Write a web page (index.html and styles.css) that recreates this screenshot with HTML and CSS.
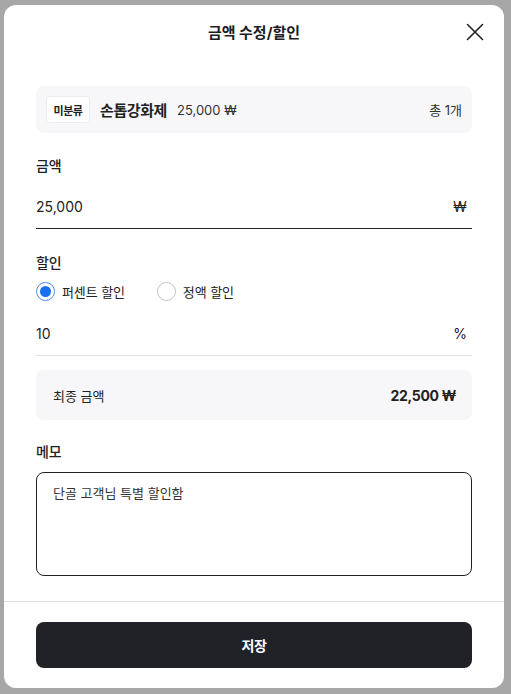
FILE: index.html
```html
<!doctype html>
<html lang="ko">
  <head>
    <meta charset="UTF-8" />
    <title>금액 수정/할인</title>
    <link rel="stylesheet" href="styles.css">
  </head>
  <body>
    <div class="backdrop">
      <section class="modal">
        <header class="modal-header">
          <span></span>
          <h1 class="modal-title">금액 수정/할인</h1>
          <button class="close-button" type="button" aria-label="닫기">
            <svg width="18" height="18" viewBox="0 0 18 18" fill="none" stroke="#222" stroke-width="1.6" stroke-linecap="round">
              <path d="M1.5 1.5L16.5 16.5M16.5 1.5L1.5 16.5" />
            </svg>
          </button>
        </header>

        <div class="modal-body">
          <div class="product">
            <span class="tag">미분류</span>
            <strong class="product-name">손톱강화제</strong>
            <span class="product-price">25,000 ₩</span>
            <span class="product-count">총 1개</span>
          </div>

          <label class="field-label label-amount" for="input-amount">금액</label>
          <div class="input-row input-row--strong">
            <input id="input-amount" class="input" type="text" value="25,000" />
            <span class="unit">₩</span>
          </div>

          <span class="field-label label-discount">할인</span>
          <div class="radio-group">
            <label class="radio-option">
              <span class="radio radio--checked"></span>
              <span>퍼센트 할인</span>
            </label>
            <label class="radio-option">
              <span class="radio"></span>
              <span>정액 할인</span>
            </label>
          </div>
          <div class="input-row input-row--light">
            <input class="input" type="text" value="10" />
            <span class="unit">%</span>
          </div>

          <div class="total">
            <span>최종 금액</span>
            <strong class="total-value">22,500 ₩</strong>
          </div>

          <label class="field-label label-memo" for="memo">메모</label>
          <textarea id="memo" class="memo">단골 고객님 특별 할인함</textarea>
        </div>

        <footer class="modal-footer">
          <button class="save-button" type="button">저장</button>
        </footer>
      </section>
    </div>
  </body>
</html>
```

FILE: styles.css
```css
* {
  margin: 0;
  padding: 0;
  box-sizing: border-box;
}

body {
  font-family: Inter, "Noto Sans CJK KR", sans-serif;
  color: #222;
  background: #a7a7a7;
}

.backdrop {
  width: 511px;
  height: 694px;
  padding: 5px 0 0 4px;
}

.modal {
  width: 500px;
  height: 683px;
  display: flex;
  flex-direction: column;
  background: #fff;
  border-radius: 12px;
  overflow: hidden;
}

.modal-header {
  height: 56px;
  padding: 0 20px 2px;
  display: grid;
  grid-template-columns: 1fr auto 1fr;
  align-items: center;
}

.modal-title {
  font-size: 15px;
  font-weight: 700;
  color: #1d1d1f;
  margin-bottom: 2px;
}

.close-button {
  justify-self: end;
  width: 18px;
  height: 18px;
  border: none;
  background: none;
  cursor: pointer;
  display: flex;
}

.modal-body {
  padding: 25px 32px 0;
  display: flex;
  flex-direction: column;
}

.product {
  height: 47px;
  padding: 0 10px;
  display: flex;
  align-items: center;
  gap: 10px;
  background: #f7f7f9;
  border-radius: 8px;
}

.tag {
  width: 44px;
  height: 27px;
  display: flex;
  align-items: center;
  justify-content: center;
  background: #fff;
  border: 1px solid #ececee;
  border-radius: 4px;
  font-size: 11px;
  font-weight: 600;
  letter-spacing: -0.4px;
}

.product-name {
  font-size: 15px;
  font-weight: 700;
  letter-spacing: -0.4px;
}

.product-price {
  font-size: 13px;
  color: #333;
}

.product-count {
  margin-left: auto;
  font-size: 13px;
  color: #333;
}

.field-label {
  height: 22px;
  display: flex;
  align-items: center;
  font-size: 14px;
  font-weight: 500;
  letter-spacing: -0.2px;
}

.label-amount {
  margin-top: 21px;
}

.label-discount {
  margin-top: 22px;
}

.label-memo {
  margin-top: 20px;
}

.input-row {
  height: 43px;
  display: flex;
  align-items: center;
  padding-bottom: 1px;
}

.input-row--strong {
  margin-top: 10px;
  border-bottom: 1px solid #222;
}

.input-row--light {
  margin-top: 12px;
  border-bottom: 1px solid #e3e3e5;
}

.input {
  flex: 1;
  border: none;
  outline: none;
  background: none;
  font-family: inherit;
  font-size: 14px;
  color: #222;
}

.unit {
  width: 16px;
  margin-right: 4px;
  text-align: center;
  font-size: 14px;
  color: #222;
}

.radio-group {
  margin-top: 8px;
  height: 20px;
  display: flex;
  align-items: center;
  gap: 32px;
}

.radio-option {
  display: flex;
  align-items: center;
  gap: 7px;
  font-size: 13px;
  letter-spacing: -0.1px;
  cursor: pointer;
}

.radio {
  width: 19px;
  height: 19px;
  border: 1px solid #c4c4c6;
  border-radius: 50%;
  display: flex;
  align-items: center;
  justify-content: center;
}

.radio--checked {
  border: 1.5px solid #4d8ff0;
}

.radio--checked::after {
  content: "";
  width: 11px;
  height: 11px;
  border-radius: 50%;
  background: #1a6fec;
}

.total {
  margin-top: 14px;
  height: 50px;
  padding: 0 16px 0 17px;
  display: flex;
  align-items: center;
  justify-content: space-between;
  background: #f7f7f9;
  border-radius: 8px;
  font-size: 13px;
}

.total-value {
  font-size: 14px;
  font-weight: 700;
  letter-spacing: -0.3px;
}

.memo {
  margin-top: 10px;
  height: 104px;
  padding: 10px 16px;
  border: 1px solid #222;
  border-radius: 8px;
  resize: none;
  outline: none;
  font-family: inherit;
  font-size: 13px;
  line-height: 20px;
  color: #333;
}

.modal-footer {
  margin-top: 25px;
  padding: 20px 32px;
  border-top: 1px solid #dedee0;
}

.save-button {
  width: 100%;
  height: 46px;
  border: none;
  border-radius: 8px;
  background: #202228;
  color: #fff;
  font-family: inherit;
  font-size: 14px;
  font-weight: 700;
  letter-spacing: -0.5px;
  cursor: pointer;
}
```
